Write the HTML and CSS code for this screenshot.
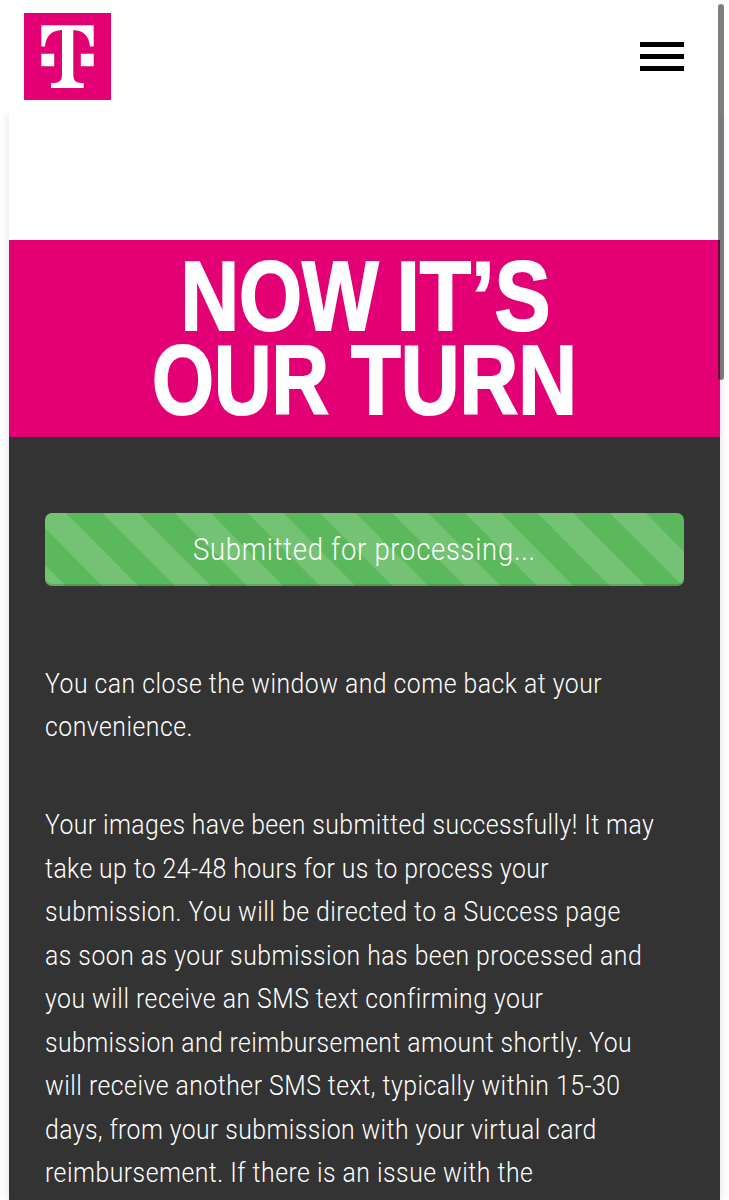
FILE: index.html
```
<!DOCTYPE html>
<html lang="en">
  <head>
    <meta charset="UTF-8" />
    <meta name="viewport" content="width=device-width, initial-scale=1.0" />
    <title>Submitted for processing</title>
    <link rel="stylesheet" href="styles.css">
  </head>
  <body>
    <header class="header">
      <svg class="logo" viewBox="0 0 87 87" role="img" aria-label="T-Mobile">
        <rect width="87" height="87" fill="#e20074" />
        <path fill="#fff" d="M17.3 12.3H69.7V33.4H66C65 23 59.5 17.4 49.3 17V62Q49.3 70 57 70H59.7V75H27V70H30Q38 70 38 62V17C27.5 17.4 22 23 21 33.4H17.3Z" />
        <path fill="#fff" d="M17.3 40.7H30.2V53.3H17.3ZM56.8 40.7H69.7V53.3H56.8Z" />
      </svg>
      <button class="menu" aria-label="Menu">
        <span class="bar"></span>
        <span class="bar"></span>
        <span class="bar"></span>
      </button>
    </header>
    <main class="page">
      <svg class="banner" viewBox="0 0 711 197">
        <text x="171.5" y="90" textLength="198" lengthAdjust="spacingAndGlyphs">NOW</text>
        <text x="387.5" y="90" textLength="154" lengthAdjust="spacingAndGlyphs">IT’S</text>
        <text x="143" y="174.3" textLength="177" lengthAdjust="spacingAndGlyphs">OUR</text>
        <text x="342" y="174.3" textLength="226" lengthAdjust="spacingAndGlyphs">TURN</text>
      </svg>
      <section class="content">
        <div class="progress">
          <span class="label">Submitted for processing...</span>
        </div>
        <p>
          <span class="line">You can close the window and come back at your</span>
          <span class="line">convenience.</span>
        </p>
        <p>
          <span class="line tight">Your images have been submitted successfully! It may</span>
          <span class="line tight">take up to 24-48 hours for us to process your</span>
          <span class="line">submission. You will be directed to a Success page</span>
          <span class="line">as soon as your submission has been processed and</span>
          <span class="line">you will receive an SMS text confirming your</span>
          <span class="line tight">submission and reimbursement amount shortly. You</span>
          <span class="line">will receive another SMS text, typically within 15-30</span>
          <span class="line tight">days, from your submission with your virtual card</span>
          <span class="line">reimbursement. If there is an issue with the</span>
        </p>
      </section>
    </main>
    <div class="scrollbar"></div>
  </body>
</html>
```
FILE: styles.css
```
body {
  margin: 0;
  height: 1200px;
  overflow: hidden;
  background-color: #fff;
  font-family: Roboto, "Liberation Sans", sans-serif;
  font-weight: 300;
}
.header {
  position: relative;
  display: flex;
  justify-content: space-between;
  align-items: center;
  box-sizing: border-box;
  height: 113px;
  padding: 0 45px 0 23.7px;
  background-color: #fff;
}
.logo {
  width: 87px;
  height: 87px;
}
.menu {
  display: flex;
  flex-direction: column;
  gap: 7.3px;
  padding: 0;
  border: none;
  background: none;
}
.bar {
  width: 44px;
  height: 5px;
  background-color: #000;
}
.page {
  box-sizing: border-box;
  height: 1087px;
  margin: 0 9px;
  padding-top: 127px;
  background-color: #fff;
  box-shadow: 0 0 9px rgba(0, 0, 0, 0.12);
}
.banner {
  display: block;
  width: 711px;
  height: 197px;
  background-color: #e20074;
  fill: #fff;
  stroke: #fff;
  stroke-width: 2px;
  font-family: "Liberation Sans", Arial, sans-serif;
  font-size: 98px;
  font-weight: bold;
}
.content {
  box-sizing: border-box;
  height: 763px;
  padding: 76px 36px 0;
  overflow: hidden;
  background-color: #333;
  color: #fff;
}
.progress {
  height: 72.5px;
  margin-bottom: 76px;
  border-radius: 7px;
  background-color: #5cb85c;
  background-image: linear-gradient(45deg, rgba(255, 255, 255, 0.15) 25%, transparent 25%, transparent 50%, rgba(255, 255, 255, 0.15) 50%, rgba(255, 255, 255, 0.15) 75%, transparent 75%, transparent);
  background-size: 72.5px 72.5px;
  background-position: -15.5px 0;
  box-shadow: inset 0 -2px 0 rgba(0, 0, 0, 0.15);
  font-size: 30.5px;
  line-height: 74px;
  text-align: center;
}
/* condensed look for the light face */
.label {
  display: inline-block;
  letter-spacing: 0.8px;
  transform: scaleX(0.9);
}
p {
  margin: 0 0 54.5px;
  font-size: 27.5px;
  line-height: 43.5px;
  white-space: nowrap;
}
.line {
  display: block;
  letter-spacing: 0.56px;
  transform: scaleX(0.9);
  transform-origin: left;
}
.tight {
  letter-spacing: 0.47px;
}
.scrollbar {
  position: absolute;
  top: 4px;
  left: 718px;
  width: 5.5px;
  height: 376px;
  border-radius: 3px;
  background-color: rgba(0, 0, 0, 0.5);
}
```
